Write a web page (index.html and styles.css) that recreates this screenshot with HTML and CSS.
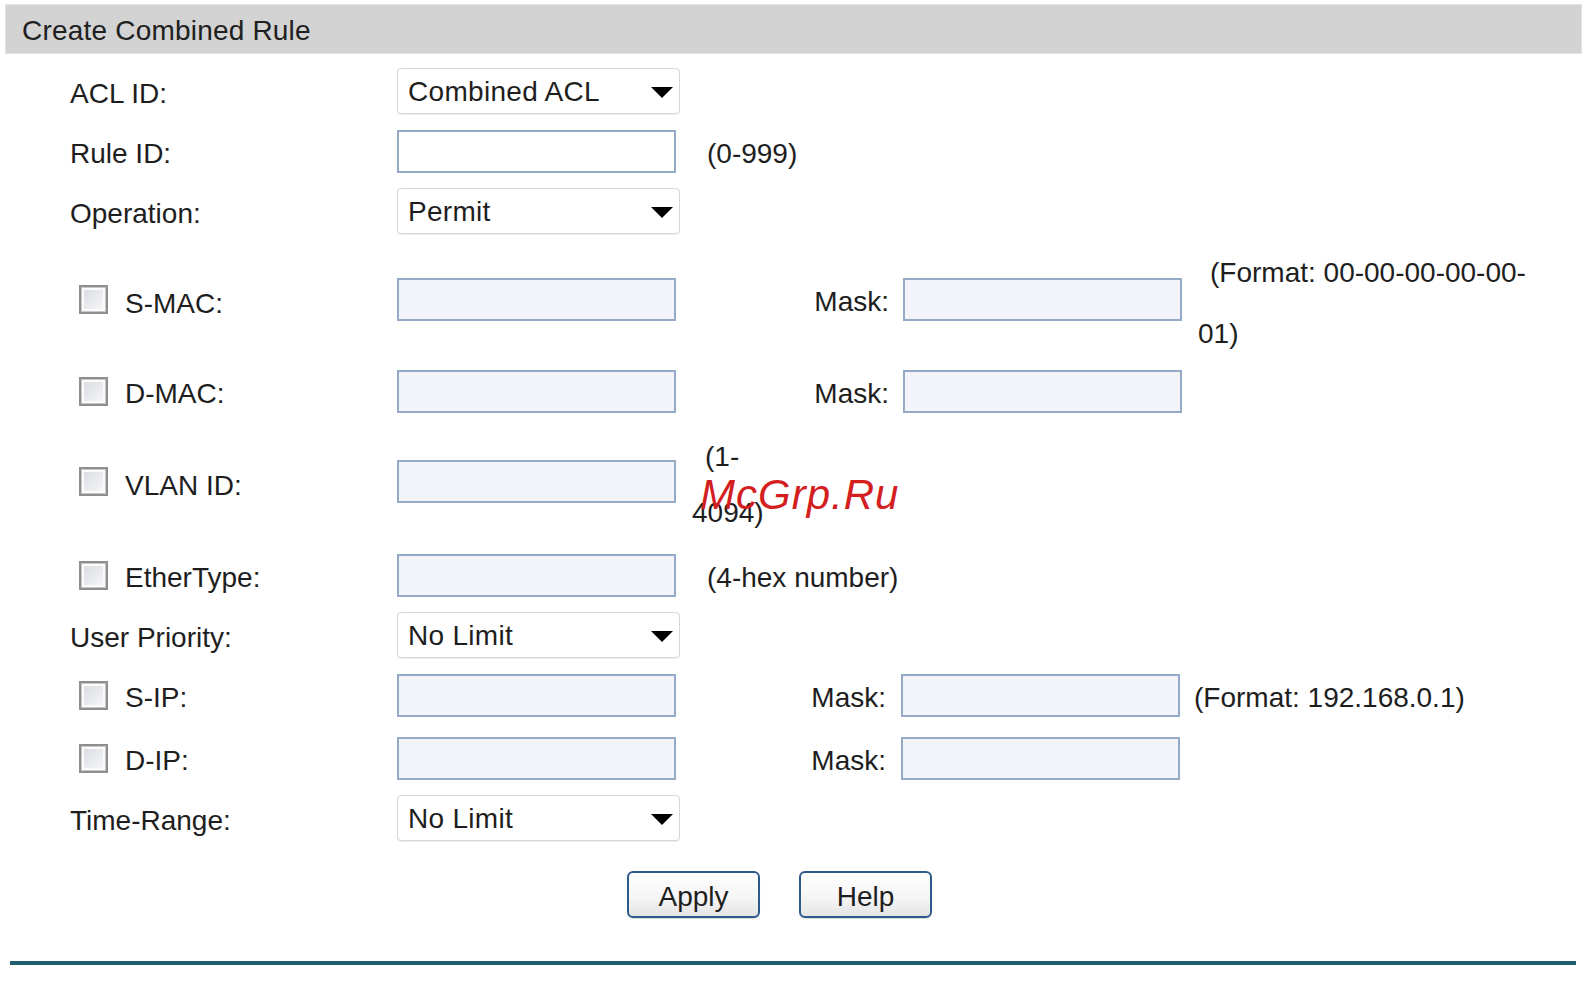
FILE: index.html
```html
<!DOCTYPE html>
<html>
<head>
<meta charset="utf-8">
<title>Create Combined Rule</title>
<link rel="stylesheet" href="styles.css">
</head>
<body>
<div class="header">Create Combined Rule</div>
<div class="form">
  <div class="row">
    <div class="lbl"><span class="t">ACL ID:</span></div>
    <div class="fld"><span class="selwrap"><select class="sel"><option>Combined ACL</option></select></span></div>
  </div>
  <div class="row">
    <div class="lbl"><span class="t">Rule ID:</span></div>
    <div class="fld"><input type="text" class="inp white"></div>
    <div class="note"><span class="t">(0-999)</span></div>
  </div>
  <div class="row">
    <div class="lbl"><span class="t">Operation:</span></div>
    <div class="fld"><span class="selwrap"><select class="sel"><option>Permit</option></select></span></div>
  </div>
  <div class="row r-smac">
    <div class="lbl"><span class="cb"></span><span class="t lo">S-MAC:</span></div>
    <div class="fld"><input type="text" class="inp"></div>
    <div class="mask"><span class="t">Mask:</span></div>
    <input type="text" class="inp">
    <div class="fmtmac"><span class="l1">(Format: 00-00-00-00-00-</span><span class="l2">01)</span></div>
  </div>
  <div class="row r-dmac">
    <div class="lbl"><span class="cb"></span><span class="t">D-MAC:</span></div>
    <div class="fld"><input type="text" class="inp"></div>
    <div class="mask"><span class="t">Mask:</span></div>
    <input type="text" class="inp">
  </div>
  <div class="row r-vlan">
    <div class="lbl"><span class="cb"></span><span class="t vl">VLAN ID:</span></div>
    <div class="fld"><input type="text" class="inp"></div>
    <div class="vnote"><span class="l1">(1-</span><span class="l2">4094)</span></div>
  </div>
  <div class="row r-eth">
    <div class="lbl"><span class="cb"></span><span class="t">EtherType:</span></div>
    <div class="fld"><input type="text" class="inp"></div>
    <div class="note"><span class="t">(4-hex number)</span></div>
  </div>
  <div class="row">
    <div class="lbl"><span class="t">User Priority:</span></div>
    <div class="fld"><span class="selwrap"><select class="sel"><option>No Limit</option></select></span></div>
  </div>
  <div class="row">
    <div class="lbl"><span class="cb"></span><span class="t">S-IP:</span></div>
    <div class="fld"><input type="text" class="inp"></div>
    <div class="mask ip"><span class="t">Mask:</span></div>
    <input type="text" class="inp">
    <div class="fmtip"><span class="t">(Format: 192.168.0.1)</span></div>
  </div>
  <div class="row r-dip">
    <div class="lbl"><span class="cb"></span><span class="t">D-IP:</span></div>
    <div class="fld"><input type="text" class="inp"></div>
    <div class="mask ip"><span class="t">Mask:</span></div>
    <input type="text" class="inp">
  </div>
  <div class="row">
    <div class="lbl"><span class="t">Time-Range:</span></div>
    <div class="fld"><span class="selwrap"><select class="sel"><option>No Limit</option></select></span></div>
  </div>
  <div class="row r-btn">
    <button class="btn">Apply</button>
    <button class="btn">Help</button>
  </div>
</div>
<div class="bottomline"></div>
<div class="watermark">McGrp.Ru</div>
</body>
</html>
```

FILE: styles.css
```css
html, body {
  margin: 0;
  padding: 0;
  background: #ffffff;
}
body {
  font-family: "Liberation Sans", Arial, sans-serif;
  font-size: 28px;
  color: #1e1e1e;
  position: relative;
  width: 1587px;
  height: 989px;
  overflow: hidden;
}
.header {
  margin: 4px 5px 0 5px;
  height: 50px;
  box-sizing: border-box;
  background: #d3d3d3;
  border: 1px solid #e2e2e2;
  padding: 2px 0 0 16px;
  line-height: 48px;
  color: #202020;
  letter-spacing: 0.2px;
}
.form {
  margin-top: 7px;
  padding-left: 70px;
}
.row {
  display: flex;
  align-items: center;
  height: 60px;
}
.r-smac { margin-top: 28px; }
.r-dmac { margin-top: 32px; }
.r-vlan { margin-top: 30px; }
.r-eth { margin-top: 34px; }
.r-dip { margin-top: 3px; }
.r-btn { margin-top: 16px; padding-left: 557px; }
.t {
  display: block;
  line-height: 32px;
  padding-top: 6px;
  white-space: nowrap;
}
.t.lo { padding-top: 10px; }
.t.vl { padding-top: 10px; }
.lbl {
  width: 327px;
  display: flex;
  align-items: center;
  flex: none;
}
.cb {
  display: block;
  width: 29px;
  height: 29px;
  box-sizing: border-box;
  margin-left: 9px;
  margin-right: 17px;
  border: 2px solid #8e8e8e;
  box-shadow: inset 0 0 0 1px #c8c8c8, inset 0 0 0 3px #fbfbfb;
  background: linear-gradient(135deg, #d6d9de 0%, #e9ebef 55%, #fafafa 100%);
}
.fld {
  width: 295px;
  flex: none;
}
.selwrap {
  display: block;
  position: relative;
  width: 283px;
  height: 46px;
  box-sizing: border-box;
  border: 1px solid #d6d6d6;
  border-radius: 4px;
  background: #ffffff;
  box-shadow: 0 1px 1px rgba(0, 0, 0, 0.07);
}
.selwrap::after {
  content: "";
  position: absolute;
  right: 6px;
  top: 18px;
  width: 0;
  height: 0;
  border-left: 11px solid transparent;
  border-right: 11px solid transparent;
  border-top: 11px solid #000000;
  pointer-events: none;
}
.sel {
  -webkit-appearance: none;
  appearance: none;
  display: block;
  width: 100%;
  height: 100%;
  border: none;
  background: transparent;
  font-family: "Liberation Sans", Arial, sans-serif;
  font-size: 28px;
  color: #1e1e1e;
  padding: 0 0 0 10px;
  margin: 0;
  outline: none;
  letter-spacing: 0.3px;
}
.inp {
  display: block;
  flex: none;
  width: 279px;
  height: 43px;
  box-sizing: border-box;
  border: 2px solid #95aac6;
  background: #f3f4f9;
  margin: 0;
  padding: 0 6px;
  font-family: "Liberation Sans", Arial, sans-serif;
  font-size: 28px;
  outline: none;
}
.inp.white { background: #ffffff; }
.note {
  padding-left: 15px;
}
.mask {
  width: 211px;
  flex: none;
  box-sizing: border-box;
  text-align: right;
  padding-right: 14px;
}
.mask.ip { width: 209px; padding-right: 15px; }
.fmtip {
  margin-left: 14px;
}
.fmtmac {
  margin-left: 16px;
  padding-top: 7px;
  white-space: nowrap;
}
.fmtmac .l1, .fmtmac .l2 {
  display: block;
  line-height: 61px;
}
.fmtmac .l1 { padding-left: 12px; }
.vnote {
  padding-top: 8px;
  white-space: nowrap;
}
.vnote .l1, .vnote .l2 {
  display: block;
  line-height: 56px;
}
.vnote .l1 { padding-left: 13px; }
.btn {
  width: 133px;
  height: 47px;
  box-sizing: border-box;
  border: 2px solid #2c5a8b;
  border-radius: 6px;
  background: linear-gradient(#fefefe 0%, #f6f6f6 55%, #e4e4e4 100%);
  font-family: "Liberation Sans", Arial, sans-serif;
  font-size: 28px;
  color: #1e1e1e;
  padding: 5px 0 0 0;
  margin: 0 39px 0 0;
  box-shadow: 0 1px 1px rgba(0, 0, 0, 0.15);
}
.bottomline {
  margin: 37px 0 0 10px;
  width: 1566px;
  height: 4px;
  background: #215f6c;
}
.watermark {
  position: absolute;
  left: 700px;
  top: 474px;
  font-family: "Liberation Sans", Arial, sans-serif;
  font-style: italic;
  font-size: 42px;
  line-height: 42px;
  letter-spacing: 1px;
  color: #d3201f;
}
```
